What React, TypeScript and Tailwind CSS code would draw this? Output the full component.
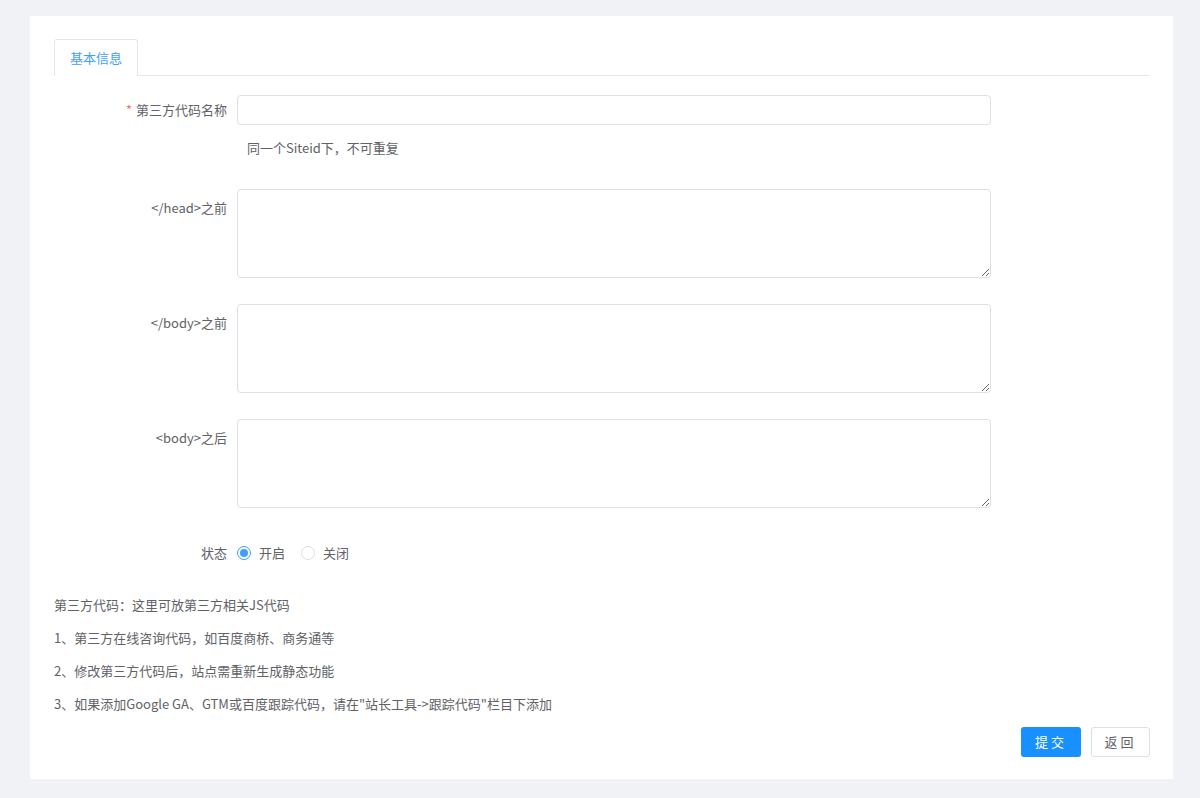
import React from "react";

const font = { fontFamily: '"Noto Sans CJK SC", "Noto Sans", sans-serif' };

function Row({ label, required, children, labelPad = "pt-[7px]" }: { label: string; required?: boolean; children: React.ReactNode; labelPad?: string }) {
  return (
    <div className="flex">
      <div className={`w-[183px] shrink-0 pr-[10px] text-right text-[13px] leading-[16px] text-[#606266] ${labelPad}`}>
        {required && <span className="mr-[4px] text-[#f56c6c]">*</span>}
        {label}
      </div>
      <div className="w-[754px]">{children}</div>
    </div>
  );
}

export default function App() {
  return (
    <div className="min-h-[798px] bg-[#f0f2f5] pt-[16px] pl-[30px] pr-[27px] pb-[19px]" style={font}>
      <div className="bg-white pr-[23px] pl-[24px] pt-[23px] pb-[22px] h-[763px] flex flex-col">
        <div className="flex border-b border-[#e4e7ed]">
          <div className="h-[37px] w-[84px] -mb-px flex items-center justify-center border border-b-0 border-[#e4e7ed] rounded-t-[3px] bg-white text-[13px] text-[#409eff]">
            基本信息
          </div>
        </div>

        <div className="mt-[19px]">
          <Row label="第三方代码名称" required>
            <div className="h-[30px] rounded-[4px] border border-[#dcdfe6]" />
          </Row>
          <div className="ml-[193px] mt-[15px] text-[13px] leading-[16px] text-[#606266]">同一个Siteid下，不可重复</div>

          <div className="mt-[33px]">
            <Row label="</head>之前" labelPad="pt-[11px]">
              <textarea className="block h-[89px] w-full resize-y rounded-[4px] border border-[#dcdfe6] outline-none" />
            </Row>
          </div>
          <div className="mt-[26px]">
            <Row label="</body>之前" labelPad="pt-[11px]">
              <textarea className="block h-[89px] w-full resize-y rounded-[4px] border border-[#dcdfe6] outline-none" />
            </Row>
          </div>
          <div className="mt-[26px]">
            <Row label="<body>之后" labelPad="pt-[11px]">
              <textarea className="block h-[89px] w-full resize-y rounded-[4px] border border-[#dcdfe6] outline-none" />
            </Row>
          </div>

          <div className="mt-[37px] flex items-center h-[16px]">
            <div className="w-[183px] shrink-0 pr-[10px] text-right text-[13px] leading-[16px] text-[#606266]">状态</div>
            <div className="flex items-center">
              <span className="flex h-[14px] w-[14px] items-center justify-center rounded-full border border-[#409eff] bg-white">
                <span className="h-[8px] w-[8px] rounded-full bg-[#409eff]" />
              </span>
              <span className="ml-[8px] text-[13px] text-[#606266]">开启</span>
              <span className="ml-[16px] h-[14px] w-[14px] rounded-full border border-[#dcdfe6] bg-white" />
              <span className="ml-[8px] text-[13px] text-[#606266]">关闭</span>
            </div>
          </div>
        </div>

        <div className="mt-[36px] flex flex-col gap-[17px] text-[13px] leading-[16px] text-[#606266]">
          <div>第三方代码：这里可放第三方相关JS代码</div>
          <div>1、第三方在线咨询代码，如百度商桥、商务通等</div>
          <div>2、修改第三方代码后，站点需重新生成静态功能</div>
          <div>3、如果添加Google GA、GTM或百度跟踪代码，请在"站长工具-&gt;跟踪代码"栏目下添加</div>
        </div>

        <div className="mt-auto flex justify-end gap-[10px]">
          <button className="h-[30px] w-[60px] rounded-[3px] bg-[#1890ff] text-[13px] tracking-[3px] text-white">提交</button>
          <button className="h-[30px] w-[59px] rounded-[3px] border border-[#dcdfe6] bg-white text-[13px] tracking-[3px] text-[#606266]">返回</button>
        </div>
      </div>
    </div>
  );
}
